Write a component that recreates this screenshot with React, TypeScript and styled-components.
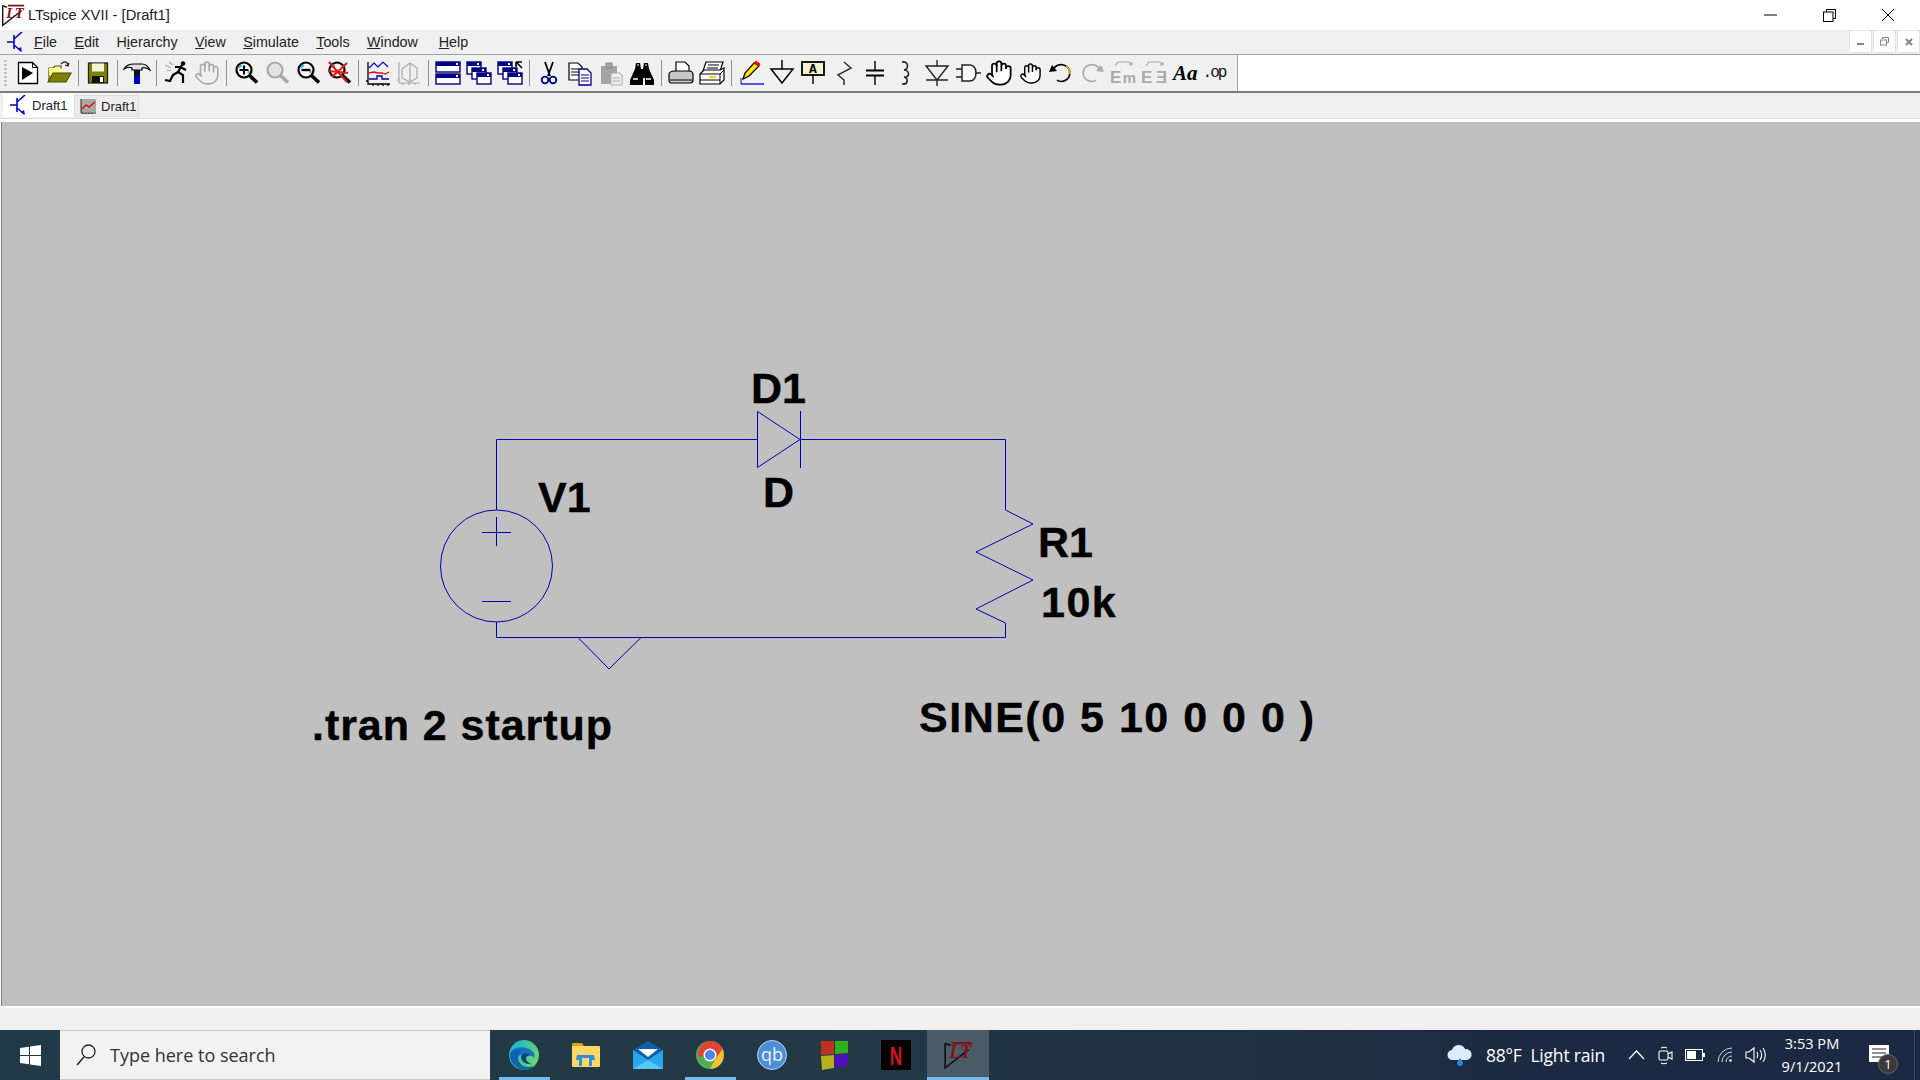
import React from 'react';
import styled, { createGlobalStyle } from 'styled-components';
import { Hand } from 'lucide-react';

const Global = createGlobalStyle`
  html, body { margin: 0; height: 100%; overflow: hidden; }
  #root { height: 100%; }
  body { font-family: "Liberation Sans", Arial, sans-serif; }
`;

const Page = styled.div`
  height: 1080px;
  display: flex;
  flex-direction: column;
  background: #fff;
`;

/* title bar */
const TitleBar = styled.div`
  height: 30px;
  display: flex;
  align-items: center;
  background: #fff;
  padding-left: 1px;
`;
const TitleText = styled.span`
  margin-left: 3px;
  font-size: 14.7px;
  color: #222;
`;
const WinControls = styled.div`
  margin-left: auto;
  display: flex;
  padding-right: 3px;
`;
const WinButton = styled.div`
  width: 58.5px;
  height: 28px;
  display: flex;
  align-items: center;
  justify-content: center;
`;

/* menu */
const MenuBar = styled.div`
  height: 24px;
  display: flex;
  align-items: center;
  background: #f0f0f0;
  border-bottom: 1px solid #a0a0a0;
  padding-left: 6px;
`;
const MenuItems = styled.div`
  display: flex;
  gap: 17.4px;
  margin-left: 8px;
  font-size: 14.3px;
  color: #222;
  span:last-child { margin-left: 3.5px; }
`;
const MdiGroup = styled.div`
  margin-left: auto;
  display: flex;
  gap: 1px;
  height: 24px;
`;
const MdiButton = styled.div`
  width: 23px;
  height: 23px;
  box-sizing: border-box;
  background: #fff;
  border: 1px solid #e2e2e2;
  display: flex;
  align-items: center;
  justify-content: center;
`;

/* toolbar */
const ToolRow = styled.div`
  height: 36px;
  display: flex;
  background: #fff;
  border-bottom: 2px solid #7c7c7c;
`;
const Toolbar = styled.div`
  width: 1238px;
  display: flex;
  align-items: center;
  background: #f0f0f0;
  border-right: 1px solid #a0a0a0;
  padding-left: 4px;
  box-sizing: border-box;
`;
const Grip = styled.div`
  width: 3px;
  height: 26px;
  margin-right: 5.5px;
  background: repeating-linear-gradient(#bdbdbd 0 2px, transparent 2px 4px);
`;
const ToolButton = styled.div`
  width: 31px;
  height: 30px;
  flex: none;
  display: flex;
  align-items: center;
  justify-content: center;
`;
const Sep = styled.div`
  width: 1px;
  height: 26px;
  flex: none;
  margin: 0 3.5px;
  background: #909090;
`;

/* tabs */
const TabBar = styled.div`
  height: 29px;
  flex: none;
  box-sizing: border-box;
  display: flex;
  align-items: flex-start;
  background: #f0f0f0;
  padding: 0 0 0 3px;
  border-bottom: 3px solid #fff;
  box-shadow: inset 0 -1px 0 #dcdcdc;
`;
const Tab = styled.div<{ $active?: boolean }>`
  display: flex;
  align-items: center;
  gap: ${p => (p.$active ? 3 : 5)}px;
  box-sizing: border-box;
  height: ${p => (p.$active ? 24 : 22)}px;
  margin-top: ${p => (p.$active ? 0 : 2)}px;
  width: ${p => (p.$active ? 71 : 65)}px;
  padding-left: ${p => (p.$active ? 6 : 5)}px;
  background: ${p => (p.$active ? '#fff' : '#ececec')};
  border: ${p => (p.$active ? 'none' : '1px solid #dedede')};
  font-size: 13px;
  color: #222;
`;

/* schematic */
const Canvas = styled.div`
  position: relative;
  flex: 1;
  background: #c0c0c0;
  border-left: 1px solid #808080;
  margin-left: 1px;
  overflow: hidden;
`;
const Wires = styled.svg`
  position: absolute;
  left: -2px;
  top: 0;
`;
const Label = styled.span<{ $x: number; $base: number; $spacing?: number }>`
  position: absolute;
  left: ${p => p.$x - 2}px;
  top: ${p => p.$base - 122 - 36}px;
  font-size: 43px;
  line-height: 1;
  font-weight: 700;
  color: #000;
  white-space: pre;
  -webkit-text-stroke: 0.4px #000;
  letter-spacing: ${p => p.$spacing ?? 0}px;
`;
const StatusBar = styled.div`
  height: 22px;
  flex: none;
  background: #f0f0f0;
  border-top: 2px solid #fff;
`;

/* taskbar */
const Taskbar = styled.div`
  height: 50px;
  flex: none;
  display: flex;
  background: linear-gradient(90deg, #203a47, #233945 45%, #1b2a42 80%, #1b2a42);
  color: #fff;
`;
const StartButton = styled.div`
  width: 60px;
  display: flex;
  align-items: center;
  justify-content: center;
`;
const SearchBox = styled.div`
  width: 430px;
  display: flex;
  align-items: center;
  gap: 14px;
  box-sizing: border-box;
  padding-left: 16px;
  background: #f2f2f2;
  border-top: 1px solid #c8c8c8;
  border-bottom: 1px solid #c8c8c8;
  font-family: "Open Sans", sans-serif;
  font-size: 18px;
  color: #333;
`;
const AppList = styled.div`
  display: flex;
  margin-left: 3px;
`;
const AppButton = styled.div<{ $state?: 'open' | 'active' }>`
  position: relative;
  width: 62px;
  display: flex;
  align-items: center;
  justify-content: center;
  background: ${p => (p.$state === 'active' ? '#4b5c68' : 'transparent')};
  &::after {
    content: '';
    display: ${p => (p.$state ? 'block' : 'none')};
    position: absolute;
    bottom: 0;
    height: 3px;
    width: ${p => (p.$state === 'active' ? '100%' : '51px')};
    background: #76b9ed;
  }
`;
const Tray = styled.div`
  margin-left: auto;
  display: flex;
  align-items: center;
  padding-right: 5px;
`;
const TrayText = styled.span`
  font-family: "Open Sans", sans-serif;
  font-size: 17.5px;
  white-space: pre;
  margin: 0 23px 0 13px;
  letter-spacing: -0.2px;
`;
const TrayIcons = styled.div`
  display: flex;
  align-items: center;
  gap: 12px;
`;
const Clock = styled.div`
  width: 92px;
  text-align: center;
  font-family: "Open Sans", sans-serif;
  font-size: 14.6px;
  line-height: 23px;
`;
const Notify = styled.div`
  position: relative;
  width: 48px;
  height: 50px;
  margin-left: 9px;
  border-right: 1px solid #3a4a60;
  box-sizing: border-box;
`;
const NotifyGlyph = styled.span`
  position: absolute;
  left: 2px;
  top: 15px;
  line-height: 0;
`;
const NotifyBadge = styled.span`
  position: absolute;
  left: 11px;
  top: 24px;
  width: 20px;
  height: 20px;
  box-sizing: border-box;
  border-radius: 50%;
  background: #3a3a3a;
  border: 1px solid #666;
  font-family: "Open Sans", sans-serif;
  font-size: 13px;
  line-height: 18px;
  text-align: center;
`;

const Ico: React.FC<{ children: React.ReactNode; size?: number }> = ({ children, size = 28 }) => (
  <svg width={size} height={size} viewBox={`0 0 ${size} ${size}`} fill="none">
    {children}
  </svg>
);

const Transistor = () => (
  <Ico size={20}>
    <path d="M1 10h7M8 3v14M8 7l8-7M8 13l7 6" stroke="#0000d0" strokeWidth="1.6" />
    <path d="M12 17l4 3-1-5z" fill="#0000d0" />
  </Ico>
);

const LtLogo: React.FC<{ size?: number }> = ({ size = 24 }) => (
  <svg width={size} height={size} viewBox="0 0 28 28" fill="none">
    <path d="M2 3l5 2M2 3v23l22-17" stroke="#111" strokeWidth="1.6" />
    <path d="M8 3h19" stroke="#7a1010" strokeWidth="2" />
    <text x="6" y="17" fontFamily="Liberation Serif, serif" fontStyle="italic" fontWeight="700" fontSize="17" fill="#8b1010">LT</text>
  </svg>
);

const Magnifier: React.FC<{ kind: 'plus' | 'minus' | 'off' | 'none' }> = ({ kind }) => {
  const ring = kind === 'none' ? '#a8a8a8' : '#000';
  return (
    <Ico>
      <circle cx="12" cy="11" r="7.5" fill={kind === 'none' ? '#e4e4e4' : '#fff'} stroke={ring} strokeWidth="2.2" />
      {kind !== 'none' && <path d="M7 9a5 5 0 0 1 3-3M16 14l1-2" stroke="#22c8e8" strokeWidth="2" />}
      <path d="M17.5 16.5l7.5 7" stroke={ring} strokeWidth="3.6" />
      {kind === 'plus' && <path d="M12 6.5v9M7.5 11h9" stroke="#000" strokeWidth="2" />}
      {kind === 'minus' && <path d="M7.5 11h9" stroke="#000" strokeWidth="2.4" />}
      {kind === 'off' && <path d="M4 3l18 20M22 4L7 18M3 12l20 2" stroke="#e81818" strokeWidth="2" />}
    </Ico>
  );
};

const MiniWin: React.FC<{ x: number; y: number; w: number; h: number }> = ({ x, y, w, h }) => (
  <g>
    <rect x={x} y={y} width={w} height={h} fill="#fff" stroke="#000080" strokeWidth="1.4" />
    <rect x={x} y={y} width={w} height="4" fill="#000080" />
    <rect x={x + w - 4} y={y + 1} width="2" height="2" fill="#fff" />
  </g>
);

const Play = () => (
  <Ico>
    <path d="M4.5 3.5h14l5 5v16h-19z" fill="#fff" stroke="#000" strokeWidth="1.3" />
    <path d="M18.5 3.5v5h5" stroke="#000" />
    <path d="M8 8l11 6-11 7z" fill="#000" />
  </Ico>
);
const OpenFolder = () => (
  <Ico>
    <path d="M4 22V9h4l2-2h6v3" fill="#ffff90" stroke="#555500" strokeWidth="1.2" />
    <path d="M4 9h12v7H4z" fill="#ffff90" />
    <path d="M3 23l5-9h18l-5 9z" fill="#808000" stroke="#4d4d00" strokeWidth="1.2" />
    <path d="M16 5c3-3 6-3 7 1M24 4l-1 3-3-1" stroke="#222" strokeWidth="1.2" />
  </Ico>
);
const Floppy = () => (
  <Ico>
    <rect x="4.5" y="4" width="19" height="20" fill="#808000" stroke="#222" strokeWidth="1.3" />
    <rect x="8" y="4.5" width="12" height="8" fill="#f4f4dc" />
    <rect x="8" y="17" width="12" height="7" fill="#111" />
    <rect x="16" y="18" width="3" height="5" fill="#fff" />
  </Ico>
);
const Hammer = () => (
  <Ico>
    <path d="M1 10c2-4 6-5 10-5h8c3 0 6 2 8 6-3-2-6-3-8-2v2H9V9C7 8 4 8 1 10z" fill="#e0e0e0" stroke="#000" strokeWidth="1.2" />
    <rect x="11" y="11" width="6" height="6" fill="#111" />
    <rect x="11" y="17" width="6" height="8" fill="#0000c8" />
  </Ico>
);
const Runner = () => (
  <Ico>
    <path d="M3 6l6 3M5 11l4 1M7 3l4 3" stroke="#aaa" strokeWidth="1.2" />
    <circle cx="21" cy="4.5" r="2.2" fill="#000" />
    <path d="M20 6l-4 7-5 3-3 6-5-1M16 13l5 3 0 8M18 8l6 3M18 8l-5 0" stroke="#000" strokeWidth="2.2" />
  </Ico>
);
const Wave: React.FC<{ off?: boolean }> = ({ off }) =>
  off ? (
    <Ico>
      <path d="M4 3v21h21M2 21h2M8 24v2M14 24v2M20 24v2" stroke="#aaa" strokeWidth="1.2" />
      <path d="M7 10l8-6 7 5v10l-7 4-8-4zM15 4v19" stroke="#aaa" strokeWidth="1.2" />
    </Ico>
  ) : (
    <Ico>
      <path d="M4 3v22h22M2 22h2M9 25v2M14 25v2M19 25v2M24 25v2" stroke="#000" strokeWidth="1.3" />
      <path d="M5 9l5-5 4 4 5-5 5 5" stroke="#0000c8" strokeWidth="1.2" />
      <path d="M5 14l5-1 4 1 4 0 3 1 4-2" stroke="#e01010" strokeWidth="1.3" />
      <path d="M5 20h8v-3h5v3h7" stroke="#0000a0" strokeWidth="1.3" />
    </Ico>
  );
const Tile = () => (
  <Ico>
    <MiniWin x={2} y={3} w={24} h={10} />
    <MiniWin x={2} y={15} w={24} h={10} />
  </Ico>
);
const Cascade: React.FC<{ arrow?: boolean }> = ({ arrow }) => (
  <Ico>
    <MiniWin x={2} y={3} w={14} h={12} />
    <MiniWin x={7} y={9} w={14} h={11} />
    <MiniWin x={12} y={14} w={14} h={11} />
    {arrow && <path d="M20 3h6M20 3v5M20 3l6 6" stroke="#000" strokeWidth="1.6" />}
  </Ico>
);
const Scissors = () => (
  <Ico>
    <path d="M10 3l5 14M18 3l-5 14" stroke="#000" strokeWidth="1.8" />
    <circle cx="10" cy="21" r="3.3" stroke="#000080" strokeWidth="1.8" />
    <circle cx="18" cy="21" r="3.3" stroke="#000080" strokeWidth="1.8" />
  </Ico>
);
const Copy = () => (
  <Ico>
    <path d="M3 4h9l4 4v13H3z" fill="#fff" stroke="#000" strokeWidth="1.2" />
    <path d="M5 10h8M5 13h8M5 16h8" stroke="#000" />
    <path d="M13 10h8l4 4v12H13z" fill="#fff" stroke="#000080" strokeWidth="1.3" />
    <path d="M15 16h8M15 19h8M15 22h8" stroke="#000080" />
  </Ico>
);
const Paste = () => (
  <Ico>
    <path d="M4 7h16v18H4z" fill="#a4a4a4" />
    <rect x="9" y="4" width="6" height="5" fill="#a4a4a4" stroke="#888" />
    <path d="M14 14h9l2 2v10H14z" fill="#eee" stroke="#aaa" />
    <path d="M16 19h7M16 22h7" stroke="#aaa" />
  </Ico>
);
const Binoculars = () => (
  <Ico>
    <path d="M8 4h4l1 6h2l1-6h4l1 6 5 11v5h-9v-7h-2v7H2v-5l5-11z" fill="#000" />
    <path d="M5 20h5M18 20h5" stroke="#fff" strokeWidth="1.5" />
    <path d="M9 6h2M17 6h2" stroke="#fff" />
  </Ico>
);
const PrinterA = () => (
  <Ico>
    <path d="M9 3h9l4 4v7H9z" fill="#fff" stroke="#000" strokeWidth="1.2" />
    <path d="M2 16c0-2 2-4 6-4h14c3 0 4 2 4 4v5c0 2-1 3-3 3H4c-1 0-2-1-2-3z" fill="#c8c8c8" stroke="#000" strokeWidth="1.2" />
    <path d="M3 21h22" stroke="#000" />
  </Ico>
);
const PrinterB = () => (
  <Ico>
    <path d="M8 3h17l-3 9H5z" fill="#fff" stroke="#000" strokeWidth="1.2" />
    <path d="M10 6h11M9 9h11" stroke="#000" />
    <path d="M2 15l4-4h16l4-2v12l-4 4H2z" fill="#fff" stroke="#000" strokeWidth="1.2" />
    <path d="M2 15h20v10M22 15l4-4M2 21h20" stroke="#000" />
    <rect x="11" y="17" width="7" height="2" fill="#f0d020" />
  </Ico>
);
const Pencil = () => (
  <Ico>
    <path d="M6 20l2-6 9-10 5 3-10 10z" fill="#ffe800" stroke="#000" strokeWidth="1.3" />
    <path d="M17 4l2-2 4 3-1 2z" fill="#e81010" stroke="#e81010" />
    <path d="M4 25h23" stroke="#0000d0" strokeWidth="1.3" />
    <path d="M4 25V19" stroke="#0000d0" />
  </Ico>
);
const GroundIcon = () => (
  <Ico>
    <path d="M14 1v9M3 10h22L14 24z" stroke="#000" strokeWidth="1.5" />
  </Ico>
);
const LabelIcon = () => (
  <Ico>
    <rect x="3" y="3" width="22" height="13" fill="#f4f2d0" stroke="#000" strokeWidth="1.8" />
    <text x="14" y="14" textAnchor="middle" fontFamily="Liberation Mono, monospace" fontWeight="700" fontSize="13" fill="#000">A</text>
    <path d="M14 16v9" stroke="#000" strokeWidth="1.4" />
  </Ico>
);
const ResIcon = () => (
  <Ico>
    <path d="M14 3l7 6-13 7 6 5v5" stroke="#222" strokeWidth="1.4" />
  </Ico>
);
const CapIcon = () => (
  <Ico>
    <path d="M14 2v9M14 17v9" stroke="#000" strokeWidth="1.4" />
    <path d="M5 11.5h18M5 16.5h18" stroke="#000" strokeWidth="2.2" />
  </Ico>
);
const IndIcon = () => (
  <Ico>
    <path d="M10 3c7-1 7 7 2 8 6 0 6 8 0 7 5 1 4 8-2 7" stroke="#222" strokeWidth="1.6" />
  </Ico>
);
const DiodeIcon = () => (
  <Ico>
    <path d="M14 1v6M14 21v6M3 21h22M3 7h22L14 21z" stroke="#222" strokeWidth="1.4" />
  </Ico>
);
const GateIcon = () => (
  <Ico>
    <path d="M8 6h8c8 0 8 16 0 16H8zM2 10h6M2 18h6M21 14h6" stroke="#222" strokeWidth="1.5" fill="#f8f8f8" />
  </Ico>
);
const HandIcon: React.FC<{ off?: boolean; small?: boolean }> = ({ off, small }) => (
  <Hand
    size={small ? 23 : off ? 26 : 28}
    strokeWidth={1.5}
    color={off ? '#aaaaaa' : '#000000'}
    fill={off ? 'none' : '#ffffff'}
  />
);
const Undo: React.FC<{ redo?: boolean }> = ({ redo }) => {
  const c = redo ? '#aaa' : '#000';
  return (
    <Ico>
      <g transform={redo ? 'matrix(-1 0 0 1 28 0)' : undefined}>
        <path d="M6 11C8 6 14 4 19 7c5 3 5 11 0 14-3 2-7 2-9 0" stroke={c} strokeWidth="1.7" />
        {!redo && <path d="M19 7c3 2 4 5 4 8" stroke="#d8b800" strokeWidth="1.7" />}
        <path d="M2 13l3-7 5 6z" fill={c} />
      </g>
    </Ico>
  );
};
const MirrorIcon: React.FC<{ left: string; right: string }> = ({ left, right }) => (
  <Ico>
    <path d="M6 7l3-4h11l3 3M23 6l-3 0M23 6V3" stroke="#aaa" strokeWidth="1.2" />
    <text x="1" y="24" fontFamily="Liberation Sans, sans-serif" fontWeight="700" fontSize="17" fill="#aaa">{left}</text>
    <text x="27" y="24" textAnchor="end" fontFamily="Liberation Sans, sans-serif" fontWeight="700" fontSize={right === 'm' ? 15 : 17} fill="#aaa">{right}</text>
  </Ico>
);
const AaIcon = () => (
  <Ico>
    <text x="2" y="21" fontFamily="Liberation Serif, serif" fontStyle="italic" fontWeight="700" fontSize="21" fill="#000">Aa</text>
  </Ico>
);
const OpIcon = () => (
  <Ico>
    <text x="12" y="18" textAnchor="middle" fontFamily="Liberation Mono, monospace" fontSize="16" letterSpacing="-2" fill="#111">.op</text>
  </Ico>
);

const WaveTab = () => (
  <svg width="16" height="16" viewBox="0 0 16 16" fill="none">
    <rect x="1" y="1" width="15" height="13" fill="#a8a8a8" />
    <path d="M1 1v14h15M3 15v1M6 15v1M9 15v1M12 15v1" stroke="#222" />
    <path d="M2 11l4-4 3 2 6-5" stroke="#e01010" strokeWidth="1.5" />
  </svg>
);

const WindowsLogo = () => (
  <svg width="21" height="21" viewBox="0 0 21 21" fill="#fff">
    <path d="M0 3l9-1.3V10H0zM10 1.500L21 0v10H10zM0 11h9v8.300L0 18zM10 11h11v10l-11-1.500z" />
  </svg>
);
const SearchGlass = () => (
  <svg width="20" height="22" viewBox="0 0 20 22" fill="none" stroke="#222" strokeWidth="1.3">
    <circle cx="12.5" cy="7.5" r="6.5" />
    <path d="M8 13L1 21" strokeWidth="1.5" />
  </svg>
);
const Edge = () => (
  <svg width="30" height="30" viewBox="0 0 30 30">
    <defs>
      <linearGradient id="edgeA" x1="0" y1="0" x2="1" y2="0.6">
        <stop offset="0" stopColor="#12b0d8" />
        <stop offset="1" stopColor="#6cd86c" />
      </linearGradient>
    </defs>
    <circle cx="15" cy="15" r="15" fill="url(#edgeA)" />
    <path d="M2 12C4 24 14 32 24 26 14 30 6 24 9 17c2-4 12-5 16 1 1-3 0-5 0-5C20 6 6 5 2 12z" fill="#1272c8" />
    <path d="M1 15c0 8 7 15 15 15 4 0 7-2 8-4-7 3-15-1-15-9 0-4 3-6 5-7-7-1-13 0-13 5z" fill="#0e62b0" />
    <path d="M12 17c0 5 6 8 12 7-3 0-7-2-7-6 0-2 3-3 6-2-3-3-11-4-11 1z" fill="#0b3f7a" />
  </svg>
);
const Explorer = () => (
  <svg width="28" height="24" viewBox="0 0 28 24">
    <path d="M0 1c0-1 1-1 1-1h9l2 3h-12z" fill="#e0a000" />
    <rect y="3" width="28" height="21" rx="1" fill="#ffd766" />
    <path d="M5 12h17l1 5h-3v6h-3v-4h-7v4H7v-6H4z" fill="#2e8ed8" />
    <rect x="10" y="15" width="7" height="4" fill="#ffd766" />
  </svg>
);
const Mail = () => (
  <svg width="30" height="28" viewBox="0 0 30 28">
    <path d="M0 9L15 0l15 9v19H0z" fill="#0f5ea8" />
    <path d="M5 8h20l-10 8z" fill="#fff" />
    <path d="M0 9l15 10L30 9v19H0z" fill="#28a8ea" />
    <path d="M0 28l15-9 15 9z" fill="#55c8f4" />
  </svg>
);
const Chrome = () => (
  <svg width="28" height="28" viewBox="0 0 28 28">
    <circle cx="14" cy="14" r="14" fill="#4caf50" />
    <path d="M14 0a14 14 0 0 1 12.2 21L14 14H2A14 14 0 0 1 14 0z" fill="#e34234" transform="rotate(-10 14 14)" />
    <path d="M26.5 8A14 14 0 0 1 14 28l6-11 z" fill="#fbc02d" />
    <circle cx="14" cy="14" r="6.5" fill="#fff" />
    <circle cx="14" cy="14" r="5" fill="#4a86e8" />
  </svg>
);
const QBit = () => (
  <svg width="30" height="30" viewBox="0 0 30 30">
    <circle cx="15" cy="15" r="14.5" fill="#4c8fd8" stroke="#b8d4f4" />
    <text x="15" y="21" textAnchor="middle" fontFamily="Open Sans, sans-serif" fontSize="18" fill="#e8f2fc">qb</text>
  </svg>
);
const Cubes = () => (
  <svg width="28" height="30" viewBox="0 0 28 30">
    <path d="M1 1l13 0 0 13-13 1z" fill="#c03020" />
    <path d="M15 1h13v12l-13 1z" fill="#30b020" />
    <path d="M1 16l13-1v13L2 30z" fill="#b8b020" />
    <path d="M15 15l13-1v11l-13 3z" fill="#5010c0" />
  </svg>
);
const Netflix = () => (
  <svg width="30" height="30" viewBox="0 0 30 30">
    <rect width="30" height="30" fill="#000" />
    <text x="15" y="25" textAnchor="middle" fontFamily="Liberation Sans, sans-serif" fontWeight="700" fontSize="26" fill="#d81020" transform="translate(5 0) scale(0.66 1)">N</text>
  </svg>
);

const Cloud = () => (
  <svg width="26" height="22" viewBox="0 0 26 22">
    <path d="M6 16a5 5 0 0 1-1-10 7 7 0 0 1 13-1 5.5 5.5 0 0 1 2 11z" fill="#dcecfa" />
    <path d="M13 14c-2 3-3 4-3 5a3 3 0 0 0 6 0c0-1-1-2-3-5z" fill="#2a86d8" />
  </svg>
);
const Chevron = () => (
  <svg width="18" height="10" viewBox="0 0 18 10" fill="none" stroke="#fff" strokeWidth="1.2">
    <path d="M1 9l7.5-8L16 9" />
  </svg>
);
const VideoTray = () => (
  <svg width="15" height="19" viewBox="0 0 15 19" fill="none" stroke="#fff" strokeWidth="1.1">
    <rect x="1" y="5" width="9" height="9" rx="1.5" />
    <path d="M10 8l4-2v7l-4-2M3 2c2-1 4-1 6 0M3 17c2 1 4 1 6 0" />
  </svg>
);
const Battery = () => (
  <svg width="20" height="12" viewBox="0 0 20 12">
    <rect x="0.5" y="0.5" width="17" height="11" fill="none" stroke="#fff" />
    <rect x="2" y="2" width="9" height="8" fill="#fff" />
    <rect x="18" y="4" width="2" height="4" fill="#fff" />
  </svg>
);
const Wifi = () => (
  <svg width="16" height="16" viewBox="0 0 16 16" fill="none" stroke="#cfd6de" strokeWidth="1">
    <path d="M1 15A14 14 0 0 1 15 1M5 15A10 10 0 0 1 15 5M9 15a6 6 0 0 1 6-6" />
    <circle cx="13.5" cy="13.5" r="1.3" fill="#fff" stroke="none" />
  </svg>
);
const Speaker = () => (
  <svg width="21" height="18" viewBox="0 0 21 18" fill="none" stroke="#fff" strokeWidth="1.1">
    <path d="M1 6h3l5-4v14l-5-4H1zM12 6c1 2 1 4 0 6M15 4c2 3 2 7 0 10M18 2c3 4 3 10 0 14" />
  </svg>
);
const NotifyIcon = () => (
  <svg width="20" height="18" viewBox="0 0 20 18">
    <rect width="20" height="17" fill="#fff" />
    <path d="M3 4h14M3 8h14M3 12h10" stroke="#222" strokeWidth="1.2" />
  </svg>
);

type ToolItem = React.ReactElement | 'sep';
const tools: ToolItem[] = [
  <Play />, <OpenFolder />, 'sep',
  <Floppy />, 'sep',
  <Hammer />, 'sep',
  <Runner />, <HandIcon off />, 'sep',
  <Magnifier kind="plus" />, <Magnifier kind="none" />, <Magnifier kind="minus" />, <Magnifier kind="off" />, 'sep',
  <Wave />, <Wave off />, 'sep',
  <Tile />, <Cascade />, <Cascade arrow />, 'sep',
  <Scissors />, <Copy />, <Paste />, <Binoculars />, 'sep',
  <PrinterA />, <PrinterB />, 'sep',
  <Pencil />, <GroundIcon />, <LabelIcon />, <ResIcon />, <CapIcon />, <IndIcon />, <DiodeIcon />, <GateIcon />,
  <HandIcon />, <HandIcon small />, <Undo />, <Undo redo />,
  <MirrorIcon left="E" right="m" />, <MirrorIcon left="E" right="Ǝ" />, <AaIcon />, <OpIcon />,
];

const menus: [string, string, string][] = [
  ['', 'F', 'ile'], ['', 'E', 'dit'], ['H', 'i', 'erarchy'], ['', 'V', 'iew'],
  ['', 'S', 'imulate'], ['', 'T', 'ools'], ['', 'W', 'indow'], ['', 'H', 'elp'],
];

const WIRE = '#0000b4';

export default function App() {
  return (
    <Page>
      <Global />
      <TitleBar>
        <LtLogo />
        <TitleText>LTspice XVII - [Draft1]</TitleText>
        <WinControls>
          <WinButton>
            <svg width="13" height="2"><rect width="13" height="1" y="0.5" fill="#000" /></svg>
          </WinButton>
          <WinButton>
            <svg width="13" height="13" fill="none" stroke="#000">
              <path d="M3.5 3V.5h9v9H10" />
              <rect x="0.5" y="3" width="9.5" height="9.5" />
            </svg>
          </WinButton>
          <WinButton>
            <svg width="14" height="14" stroke="#000"><path d="M1 1l12 12M13 1L1 13" /></svg>
          </WinButton>
        </WinControls>
      </TitleBar>

      <MenuBar>
        <Transistor />
        <MenuItems>
          {menus.map(([pre, key, post]) => (
            <span key={pre + key + post}>{pre}<u>{key}</u>{post}</span>
          ))}
        </MenuItems>
        <MdiGroup>
          <MdiButton>
            <svg width="8" height="8"><rect y="5" width="7" height="2" fill="#78889a" /></svg>
          </MdiButton>
          <MdiButton>
            <svg width="9" height="9" fill="none" stroke="#78889a">
              <path d="M2.5 2V.5h6v5H7" />
              <rect x="0.5" y="3" width="6" height="5" />
            </svg>
          </MdiButton>
          <MdiButton>
            <svg width="8" height="8" stroke="#78889a" strokeWidth="2"><path d="M1 1l6 6M7 1L1 7" /></svg>
          </MdiButton>
        </MdiGroup>
      </MenuBar>

      <ToolRow>
        <Toolbar>
          <Grip />
          {tools.map((t, i) =>
            t === 'sep' ? <Sep key={i} /> : <ToolButton key={i}>{t}</ToolButton>
          )}
        </Toolbar>
      </ToolRow>

      <TabBar>
        <Tab $active><Transistor />Draft1</Tab>
        <Tab><WaveTab />Draft1</Tab>
      </TabBar>

      <Canvas>
        <Wires width="1920" height="884" viewBox="0 122 1920 884" fill="none" stroke={WIRE}>
          <path d="M496.5 510V439.5H757.5M800 439.5H1005.5V510L1033 524 976 552 1033 580 976 609 1005.5 623V637.5H496.5V622" />
          <circle cx="496.5" cy="566" r="56" />
          <path d="M482 532.5H511M496.5 517V546M482 601.5H511" />
          <path d="M757.5 411.5V467.5L800 439.5Z" />
          <path d="M800.5 411V468" />
          <path d="M578 637.5L609 669 641 637.5" />
        </Wires>
        <Label $x={751} $base={403}>D1</Label>
        <Label $x={538} $base={512}>V1</Label>
        <Label $x={763} $base={507}>D</Label>
        <Label $x={1038} $base={557}>R1</Label>
        <Label $x={1041} $base={617} $spacing={1.5}>10k</Label>
        <Label $x={312} $base={740} $spacing={0.95}>.tran 2 startup</Label>
        <Label $x={919} $base={732} $spacing={1.5}>SINE(0 5 10 0 0 0 )</Label>
      </Canvas>

      <StatusBar />

      <Taskbar>
        <StartButton><WindowsLogo /></StartButton>
        <SearchBox><SearchGlass />Type here to search</SearchBox>
        <AppList>
          <AppButton $state="open"><Edge /></AppButton>
          <AppButton><Explorer /></AppButton>
          <AppButton><Mail /></AppButton>
          <AppButton $state="open"><Chrome /></AppButton>
          <AppButton><QBit /></AppButton>
          <AppButton><Cubes /></AppButton>
          <AppButton><Netflix /></AppButton>
          <AppButton $state="active"><LtLogo size={30} /></AppButton>
        </AppList>
        <Tray>
          <Cloud />
          <TrayText>88°F  Light rain</TrayText>
          <TrayIcons>
            <Chevron />
            <VideoTray />
            <Battery />
            <Wifi />
            <Speaker />
          </TrayIcons>
          <Clock>3:53 PM<br />9/1/2021</Clock>
          <Notify>
            <NotifyGlyph><NotifyIcon /></NotifyGlyph>
            <NotifyBadge>1</NotifyBadge>
          </Notify>
        </Tray>
      </Taskbar>
    </Page>
  );
}
